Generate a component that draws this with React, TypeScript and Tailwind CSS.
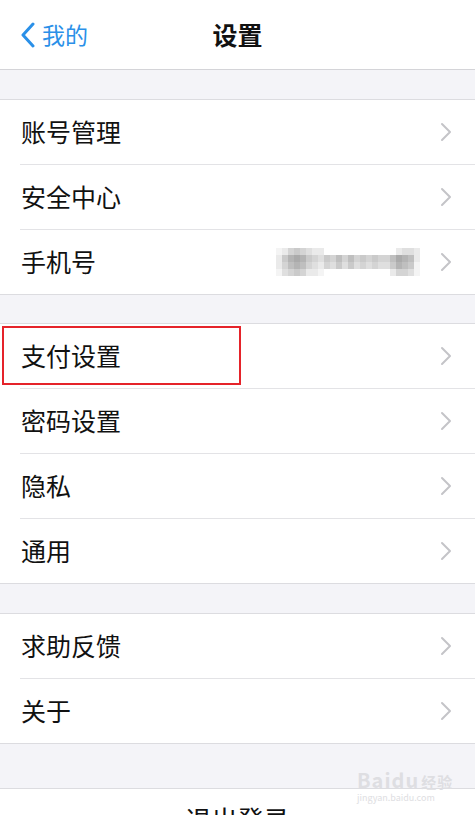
import React from "react";

const Chevron = () => (
  <svg width="12" height="20" viewBox="0 0 12 20" fill="none">
    <path d="M2 2l8 8-8 8" stroke="#c4c4c8" strokeWidth="2" strokeLinecap="round" strokeLinejoin="round" />
  </svg>
);

type Row = { label: string; extra?: React.ReactNode; boxed?: boolean };

const Group = ({ rows }: { rows: Row[] }) => (
  <div className="bg-white border-y border-[#dcdce0]">
    {rows.map((r, i) => (
      <div
        key={r.label}
        className={
          i > 0
            ? "relative h-[65px] flex items-center border-t border-[#e3e3e6] ml-[20px]"
            : "relative h-[64px] flex items-center ml-[20px]"
        }
      >
        {r.boxed && <div className="absolute left-[-18px] top-[2px] w-[239px] h-[59px] border-2 border-[#e5232a]" />}
        <span className="pl-[1px] text-[25px] text-[#111]">{r.label}</span>
        <div className="ml-auto flex items-center pr-[23px]">
          {r.extra}
          <Chevron />
        </div>
      </div>
    ))}
  </div>
);

// pixelated (mosaic) phone number: values are gray intensity 0 (none) .. 9 (dark)
const mosaic: string[] = [
  "124543220000000000002332",
  "257875435464645454468762",
  "246764324353534343357651",
  "134542210000000000024431",
];

const Blurred = () => (
  <svg width="144" height="28" viewBox="0 0 144 28" className="mr-[20px]">
    {mosaic.map((row, y) =>
      row.split("").map((c, x) => {
        const v = Number(c);
        if (!v) return null;
        return <rect key={`${x}-${y}`} x={x * 6} y={y * 7} width="6" height="7" fill="#6a6a6a" opacity={v / 14} />;
      })
    )}
  </svg>
);

export default function App() {
  return (
    <div
      className="w-[475px] h-[815px] overflow-hidden bg-[#f4f4f8] relative"
      style={{ fontFamily: '"Noto Sans CJK SC", "Noto Sans", sans-serif' }}
    >
      <div className="h-[70px] bg-white border-b border-[#d4d4d8] flex items-center relative">
        <div className="flex items-center pl-[20px] text-[#2a90e8]">
          <svg width="16" height="26" viewBox="0 0 16 26" fill="none">
            <path d="M13 2L3 13l10 11" stroke="#2a90e8" strokeWidth="3" strokeLinecap="round" strokeLinejoin="round" />
          </svg>
          <span className="ml-[6px] text-[23px]">我的</span>
        </div>
        <div className="absolute inset-x-0 text-center text-[25px] font-bold text-[#111] pointer-events-none">设置</div>
      </div>
      <div className="h-[29px]" />
      <Group rows={[{ label: "账号管理" }, { label: "安全中心" }, { label: "手机号", extra: <Blurred /> }]} />
      <div className="h-[28px]" />
      <Group rows={[{ label: "支付设置", boxed: true }, { label: "密码设置" }, { label: "隐私" }, { label: "通用" }]} />
      <div className="h-[29px]" />
      <Group rows={[{ label: "求助反馈" }, { label: "关于" }]} />
      <div className="h-[44px]" />
      <div className="bg-white border-t border-[#dcdce0] h-[60px] flex justify-center pt-[10px]">
        <span className="text-[26px] text-[#111]">退出登录</span>
      </div>
      <div className="absolute left-[357px] top-[770px] text-[#dedee2] leading-none">
        <div className="text-[20px] font-bold tracking-[1px]">Baidu<span className="text-[15px] ml-[2px]">经验</span></div>
        <div className="text-[9px] mt-[3px]">jingyan.baidu.com</div>
      </div>
    </div>
  );
}
